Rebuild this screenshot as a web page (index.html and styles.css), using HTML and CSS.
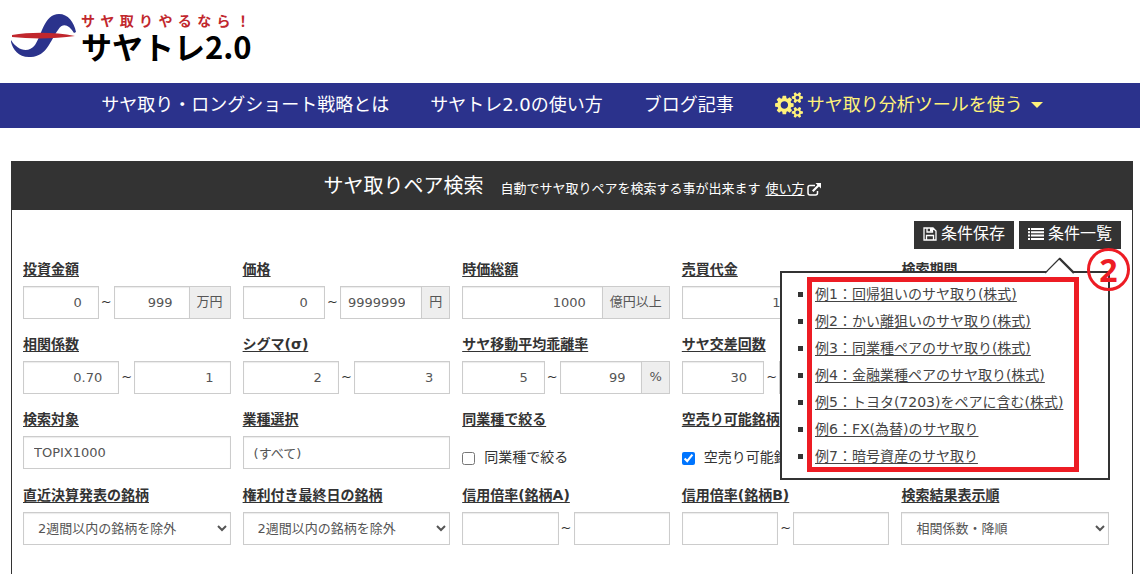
FILE: index.html
```
<!DOCTYPE html>
<html lang="ja">
<head>
<meta charset="utf-8">
<meta name="viewport" content="width=device-width, initial-scale=1">
<title>サヤ取りペア検索 | サヤトレ2.0</title>
<link rel="stylesheet" href="styles.css">
</head>
<body>
<header class="site-header">
  <a class="brand" href="#">
    <svg class="brand-mark" viewBox="0 0 66 46" aria-hidden="true">
      <path fill="#2b338c" d="M0 27C6 37 17 41 24 32C31 22 33 1 48 1C57 1 63 9 65 19L63 20C58 12 52 9 47 17C39 28 36 43 20 44C8 45 2 37 0 29Z"/>
      <path fill="#c1272d" d="M1 22C20 19 44 19 64 23C44 26 20 26 1 24Z"/>
    </svg>
    <span class="brand-text">
      <span class="brand-lead">サヤ取りやるなら！</span>
      <span class="brand-name">サヤトレ2.0</span>
    </span>
  </a>
</header>

<nav class="main-nav">
  <a href="#">サヤ取り・ロングショート戦略とは</a>
  <a href="#">サヤトレ2.0の使い方</a>
  <a href="#">ブログ記事</a>
  <a class="nav-tool" href="#">
    <svg class="icon-cogs" viewBox="0 0 1920 1792" aria-hidden="true"><path fill="currentColor" d="M896 896q0-106-75-181t-181-75-181 75-75 181 75 181 181 75 181-75 75-181zm768 512q0-52-38-90t-90-38-90 38-38 90q0 53 37.500 90.500t90.500 37.500 90.500-37.500 37.500-90.500zm0-1024q0-52-38-90t-90-38-90 38-38 90q0 53 37.500 90.500t90.500 37.500 90.500-37.500 37.500-90.500zm-384 421v185q0 10-7 19.500t-16 10.500l-155 24q-11 35-32 76 34 48 90 115 7 11 7 20 0 12-7 19-23 30-82.500 89.500t-78.500 59.500q-11 0-21-7l-115-90q-37 19-77 31-11 108-23 155-7 24-30 24h-186q-11 0-20-7.500t-10-17.500l-23-153q-34-10-75-31l-118 89q-7 7-20 7-11 0-21-8-144-133-144-160 0-9 7-19 10-14 41-53t47-61q-23-44-35-82l-152-24q-10-1-17-9.500t-7-19.500v-185q0-10 7-19.500t16-10.500l155-24q11-35 32-76-34-48-90-115-7-11-7-20 0-12 7-20 22-30 82-89t79-59q11 0 21 7l115 90q34-18 77-32 11-108 23-154 7-24 30-24h186q11 0 20 7.500t10 17.500l23 153q34 10 75 31l118-89q8-7 20-7 11 0 21 8 144 133 144 160 0 8-7 19-12 16-42 54t-45 60q23 48 34 82l152 23q10 2 17 10.500t7 19.500zm640 533v140q0 16-149 31-12 27-30 52 51 113 51 138 0 4-4 7-122 71-124 71-8 0-46-47t-52-68q-20 2-30 2t-30-2q-14 21-52 68t-46 47q-2 0-124-71-4-3-4-7 0-25 51-138-18-25-30-52-149-15-149-31v-140q0-16 149-31 13-29 30-52-51-113-51-138 0-4 4-7 4-2 35-20t59-34 30-16q8 0 46 46.500t52 67.500q20-2 30-2t30 2q51-71 92-112l6-2q4 0 124 70 4 3 4 7 0 25-51 138 17 23 30 52 149 15 149 31zm0-1024v140q0 16-149 31-12 27-30 52 51 113 51 138 0 4-4 7-122 71-124 71-8 0-46-47t-52-68q-20 2-30 2t-30-2q-14 21-52 68t-46 47q-2 0-124-71-4-3-4-7 0-25 51-138-18-25-30-52-149-15-149-31v-140q0-16 149-31 13-29 30-52-51-113-51-138 0-4 4-7 4-2 35-20t59-34 30-16q8 0 46 46.500t52 67.500q20-2 30-2t30 2q51-71 92-112l6-2q4 0 124 70 4 3 4 7 0 25-51 138 17 23 30 52 149 15 149 31z"/></svg>
    <span>サヤ取り分析ツールを使う</span>
    <svg class="icon-caret" viewBox="0 0 12 6" aria-hidden="true"><path fill="currentColor" d="M0 0H12L6 6Z"/></svg>
  </a>
</nav>

<main class="panel">
  <div class="panel-head">
    <h1>サヤ取りペア検索</h1>
    <p>自動でサヤ取りペアを検索する事が出来ます</p>
    <a href="#"><span class="underlined">使い方</span>
      <svg class="icon-ext" viewBox="0 0 14 13" aria-hidden="true"><path fill="none" stroke="currentColor" stroke-width="1.500" d="M8 2.500H3Q1 2.500 1 4.500V10Q1 12 3 12H8.500Q10.500 12 10.500 10V8"/><path fill="currentColor" d="M8.500 0H14V5.500L12 3.600L6.500 9L5 7.500L10.400 2Z"/></svg>
    </a>
  </div>

  <form class="panel-body">
    <div class="toolbar">
      <button type="button" class="tool-btn">
        <svg class="icon-save" viewBox="0 0 14 14" aria-hidden="true"><path fill="none" stroke="currentColor" stroke-width="1.300" d="M1 1H10L13 4V13H1Z M3.500 13V8.500H10.500V13 M4 1V5H9.500V1"/><path fill="currentColor" d="M7 1H9V4.500H7Z"/></svg>
        <span>条件保存</span>
      </button>
      <button type="button" class="tool-btn">
        <svg class="icon-list" viewBox="0 0 16 12" aria-hidden="true"><path fill="currentColor" d="M0 0H2V2H0Z M3 0H16V2H3Z M0 3.300H2V5.300H0Z M3 3.300H16V5.300H3Z M0 6.600H2V8.600H0Z M3 6.600H16V8.600H3Z M0 10H2V12H0Z M3 10H16V12H3Z"/></svg>
        <span>条件一覧</span>
      </button>

      <div class="popup">
        <svg class="popup-arrow" viewBox="0 0 30 17" aria-hidden="true"><path fill="#fff" d="M0 17L15 1L30 17Z"/><path fill="none" stroke="#333" stroke-width="1.200" d="M0 16L15 1"/><path fill="none" stroke="#333" stroke-width="2.400" d="M14.500 1.500L29 16"/></svg>
        <ul>
          <li><a href="#">例1：回帰狙いのサヤ取り(株式)</a></li>
          <li><a href="#">例2：かい離狙いのサヤ取り(株式)</a></li>
          <li><a href="#">例3：同業種ペアのサヤ取り(株式)</a></li>
          <li><a href="#">例4：金融業種ペアのサヤ取り(株式)</a></li>
          <li><a href="#">例5：トヨタ(7203)をペアに含む(株式)</a></li>
          <li><a href="#">例6：FX(為替)のサヤ取り</a></li>
          <li><a href="#">例7：暗号資産のサヤ取り</a></li>
        </ul>
        <div class="mark-frame"></div>
        <span class="mark-number">2</span>
      </div>
    </div>

    <div class="fields">
      <div class="field">
        <label for="amount-min">投資金額</label>
        <div class="control"><input id="amount-min" class="num" value="0"><span class="tilde">~</span><input class="num" aria-label="投資金額 上限" value="999"><span class="unit">万円</span></div>
      </div>
      <div class="field">
        <label for="price-min">価格</label>
        <div class="control"><input id="price-min" class="num" value="0"><span class="tilde">~</span><input class="num" aria-label="価格 上限" value="9999999"><span class="unit">円</span></div>
      </div>
      <div class="field">
        <label for="cap">時価総額</label>
        <div class="control"><input id="cap" class="num" value="1000"><span class="unit">億円以上</span></div>
      </div>
      <div class="field">
        <label for="turnover">売買代金</label>
        <div class="control"><input id="turnover" class="num" value="1000"><span class="unit">億円以上</span></div>
      </div>
      <div class="field">
        <label for="period">検索期間</label>
        <div class="control"><input id="period"></div>
      </div>

      <div class="field">
        <label for="corr-min">相関係数</label>
        <div class="control"><input id="corr-min" class="num" value="0.70"><span class="tilde">~</span><input class="num" aria-label="相関係数 上限" value="1"></div>
      </div>
      <div class="field">
        <label for="sigma-min">シグマ(σ)</label>
        <div class="control"><input id="sigma-min" class="num" value="2"><span class="tilde">~</span><input class="num" aria-label="シグマ 上限" value="3"></div>
      </div>
      <div class="field">
        <label for="dev-min">サヤ移動平均乖離率</label>
        <div class="control"><input id="dev-min" class="num" value="5"><span class="tilde">~</span><input class="num" aria-label="サヤ移動平均乖離率 上限" value="99"><span class="unit">%</span></div>
      </div>
      <div class="field">
        <label for="cross-min">サヤ交差回数</label>
        <div class="control"><input id="cross-min" class="num" value="30"><span class="tilde">~</span><input class="num" aria-label="サヤ交差回数 上限"><span class="unit">回</span></div>
      </div>

      <div class="field row-start">
        <label for="target">検索対象</label>
        <div class="control"><input id="target" value="TOPIX1000"></div>
      </div>
      <div class="field">
        <label for="sector">業種選択</label>
        <div class="control"><input id="sector" value="(すべて)"></div>
      </div>
      <div class="field">
        <span class="caption">同業種で絞る</span>
        <label class="check"><input type="checkbox"><span>同業種で絞る</span></label>
      </div>
      <div class="field">
        <span class="caption">空売り可能銘柄</span>
        <label class="check"><input type="checkbox" checked><span>空売り可能銘柄</span></label>
      </div>

      <div class="field row-start">
        <label for="earnings">直近決算発表の銘柄</label>
        <div class="control"><select id="earnings"><option>2週間以内の銘柄を除外</option></select></div>
      </div>
      <div class="field">
        <label for="rights">権利付き最終日の銘柄</label>
        <div class="control"><select id="rights"><option>2週間以内の銘柄を除外</option></select></div>
      </div>
      <div class="field">
        <label for="margin-a">信用倍率(銘柄A)</label>
        <div class="control"><input id="margin-a" class="num"><span class="tilde">~</span><input class="num" aria-label="信用倍率(銘柄A) 上限"></div>
      </div>
      <div class="field">
        <label for="margin-b">信用倍率(銘柄B)</label>
        <div class="control"><input id="margin-b" class="num"><span class="tilde">~</span><input class="num" aria-label="信用倍率(銘柄B) 上限"></div>
      </div>
      <div class="field">
        <label for="order">検索結果表示順</label>
        <div class="control"><select id="order"><option>相関係数・降順</option></select></div>
      </div>
    </div>
  </form>
</main>
</body>
</html>
```
FILE: styles.css
```
* { box-sizing: border-box; }

body {
  margin: 0;
  min-height: 100vh;
  display: flex;
  flex-direction: column;
  overflow-x: hidden;
  background: #fff;
  color: #333;
  font: 14px/20px "DejaVu Sans", "Noto Sans CJK JP", sans-serif;
}

a { color: inherit; text-decoration: none; }
svg { display: block; flex: none; }
input, select, button { font: inherit; color: inherit; }

/* Logo */
.site-header { display: flex; padding: 12px 11px 21px; }
.brand { display: flex; gap: 4px; }
.brand-mark { width: 66px; height: 46px; margin-top: 1px; }
.brand-text {
  display: flex;
  flex-direction: column;
  gap: 2px;
  font-family: "Noto Sans CJK JP", sans-serif;
  font-weight: 700;
}
.brand-lead {
  width: 169px;
  font-size: 14px;
  line-height: 16px;
  color: #c1272d;
  text-align: justify;
  text-align-last: justify;
}
.brand-name {
  font-size: 31px;
  line-height: 32px;
  color: #000;
  white-space: nowrap;
}

/* Navigation */
.main-nav {
  display: flex;
  justify-content: center;
  align-items: center;
  gap: 41px;
  height: 45px;
  padding: 0 0 2px 4px;
  background: #2b328c;
  color: #fff;
  font-size: 18px;
  line-height: 27px;
  white-space: nowrap;
}
.nav-tool { display: flex; align-items: center; gap: 4px; color: #fff27a; }
.icon-cogs { width: 28px; height: 26px; }
.icon-caret { width: 12px; height: 6px; margin-left: 4px; }

/* Search panel */
.panel {
  flex: 1;
  margin: 33px 7px 0 11px;
  border: 1px solid #333;
  border-width: 0 1px;
}
.panel-head {
  display: flex;
  justify-content: center;
  align-items: baseline;
  padding: 10px 0 9px;
  background: #333;
  color: #fff;
  font-size: 13px;
  white-space: nowrap;
}
.panel-head h1 { margin: 0 17px 0 0; font-size: 20px; line-height: 30px; font-weight: 400; }
.panel-head p { margin: 0 5px 0 0; }
.panel-head a { display: flex; align-items: center; gap: 2px; }
.underlined { text-decoration: underline; text-underline-offset: 2px; }
.icon-ext { width: 14px; height: 13px; }

.panel-body { padding: 11px 11px 28px; }

.toolbar { position: relative; display: flex; justify-content: flex-end; gap: 5px; }
.tool-btn {
  display: flex;
  align-items: center;
  gap: 4px;
  height: 28px;
  padding: 0 9px 2px;
  border: 0;
  background: #333;
  color: #fff;
  font-size: 16px;
}
.icon-save { width: 14px; height: 14px; }
.icon-list { width: 16px; height: 12px; }

.fields {
  display: grid;
  grid-template-columns: repeat(5, minmax(0, 1fr));
  gap: 15px 12px;
  margin: 10px 12px 0 0;
}
.row-start { grid-column-start: 1; }
.field { display: flex; flex-direction: column; gap: 7px; white-space: nowrap; }
.field > label:not(.check), .caption {
  align-self: flex-start;
  font-weight: 700;
  text-decoration: underline;
  text-underline-offset: 2px;
}
.control { display: flex; height: 33px; font-size: 13px; color: #555; }
.control input, .control select {
  flex: 1 1 0;
  min-width: 0;
  height: 33px;
  padding: 0 10px;
  border: 1px solid #ccc;
  border-radius: 0;
  background-color: #fff;
  box-shadow: inset 0 1px 1px rgba(0, 0, 0, 0.08);
}
.control .num { padding: 0 16px 0 7px; text-align: right; }
.tilde { width: 15px; line-height: 31px; text-align: center; color: #333; }
.unit {
  padding: 0 7px;
  border: 1px solid #ccc;
  border-left: 0;
  background: #eee;
  line-height: 29px;
}
.check { display: flex; align-items: center; gap: 9px; height: 34px; padding-top: 8px; }
.check input { width: 13px; height: 13px; margin: 3px 0 0; }

/* Saved conditions popup */
.popup {
  position: absolute;
  z-index: 1;
  top: 50px;
  right: 11px;
  width: 330px;
  padding: 8px 0;
  border: 2px solid #333;
  background: #fff;
}
.popup-arrow { position: absolute; top: -16px; right: 33px; width: 30px; height: 17px; }
.popup ul { margin: 0; padding: 0 0 0 16px; list-style: none; line-height: 27px; }
.popup li { display: flex; align-items: center; gap: 12px; }
.popup li::before { content: ""; width: 5px; height: 5px; background: #333; }
.popup a { text-decoration: underline; text-underline-offset: 2px; color: #444; }
.mark-frame {
  position: absolute;
  top: 4px;
  left: 25px;
  right: 29px;
  bottom: 6px;
  border: 5px solid #ed1c24;
  pointer-events: none;
}
.mark-number {
  position: absolute;
  top: -25px;
  right: -22px;
  width: 43px;
  height: 43px;
  border: 3px solid #ed1c24;
  border-radius: 50%;
  color: #ed1c24;
  font: 700 32px/37px "Noto Sans", sans-serif;
  text-align: center;
}
```
